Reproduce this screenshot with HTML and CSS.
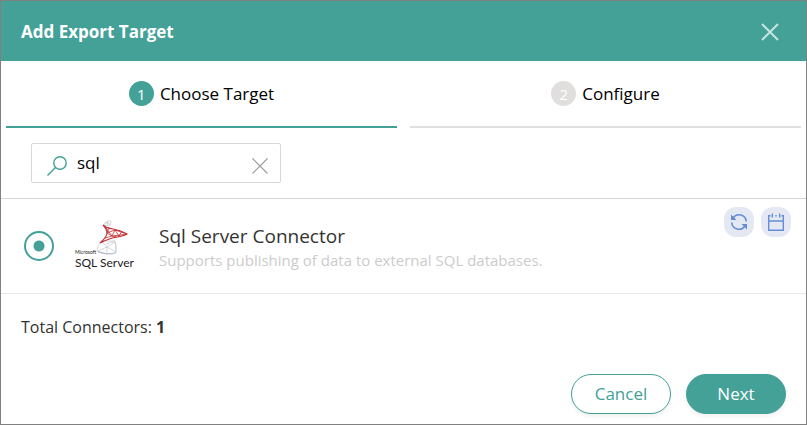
FILE: index.html
```html
<!DOCTYPE html>
<html lang="en">
<head>
<meta charset="utf-8">
<title>Add Export Target</title>
<link rel="stylesheet" href="styles.css">
</head>
<body>
<main class="dialog" role="dialog" aria-labelledby="dialog-title">
  <header class="header">
    <h1 class="title" id="dialog-title">Add Export Target</h1>
    <button class="icon-button" type="button" aria-label="Close">
      <svg width="18" height="18" viewBox="0 0 18 18" fill="none" stroke="#c7e3e0" stroke-width="2"><path d="M1 1l16 16M17 1L1 17"/></svg>
    </button>
  </header>

  <ol class="steps">
    <li class="step step-active" aria-current="step"><span class="step-number">1</span><span>Choose Target</span></li>
    <li class="step"><span class="step-number">2</span><span>Configure</span></li>
  </ol>

  <div class="search-bar">
    <div class="search">
      <svg width="20" height="20" viewBox="0 0 20 20" fill="none" stroke="#43a198" stroke-width="1.4"><circle cx="13" cy="7" r="6.2"/><path d="M8.500 11.500L.5 19.500"/></svg>
      <input class="search-input" type="text" value="sql" aria-label="Search connectors">
      <button class="icon-button" type="button" aria-label="Clear search">
        <svg width="16" height="16" viewBox="0 0 16 16" fill="none" stroke="#999" stroke-width="1.1"><path d="M.5.5l15 15M15.500.5l-15 15"/></svg>
      </button>
    </div>
  </div>

  <section class="connector">
    <input class="radio" type="radio" name="connector" id="sql-server" checked>
    <svg class="logo" width="62" height="52" viewBox="0 0 62 52" aria-hidden="true">
      <g fill="none" stroke="#c3c7cc" stroke-width=".7">
        <path d="M28 6q1-4 5-5t3 1l-1 3-7 1zM32 2l1 3M28 6l5-4 2 3"/>
        <path d="M26 21q-4 6-4 10 1 2 9 3t10-2q1-6-1-11zM26 21l6 6 8-5 1 10-9-5-9 4 9 3 0-7M40 21l-9 3"/>
      </g>
      <path d="M23 32q8 3 18 1" fill="none" stroke="#a9b7cd" stroke-width=".8"/>
      <g fill="none" stroke="#c22f33" stroke-width=".8">
        <path d="M28 5q3 3 10 4t14 5q-3 2-10 3T25 23q7-6 7-10t-4-8z" stroke-width="1.1"/>
        <path d="M31 8l6 8 3-6 4 6 3-5M32 13l8-3 12 4-15 2-5-3M30 18l7-2 5 1M34 7l-2 6"/>
      </g>
      <text class="logo-maker" x="0" y="34">Microsoft</text>
      <text class="logo-name" x="0" y="47">SQL Server</text>
    </svg>
    <label class="connector-text" for="sql-server">
      <span class="connector-name">Sql Server Connector</span>
      <span class="connector-description">Supports publishing of data to external SQL databases.</span>
    </label>
    <div class="badges">
      <span class="badge" role="img" aria-label="Refresh">
        <svg width="18" height="18" viewBox="0 0 18 18" fill="none" stroke="#668fd3" stroke-width="1.6"><path d="M3 5A7.300 7.300 0 0 1 16.300 8.500M15 13A7.300 7.300 0 0 1 1.700 9.500"/><path d="M1 1.500v5.500h5.500zM17 16.500v-5.500h-5.500z" fill="#668fd3" stroke="none"/></svg>
      </span>
      <span class="badge" role="img" aria-label="Schedule">
        <svg width="18" height="18" viewBox="0 0 18 18" fill="none" stroke="#668fd3" stroke-width="1.4"><path d="M3.500 2.700H1.700v14.600h14.600V2.700h-1.800M1.700 8h14.600M8.300 2.700h1.400"/><path d="M5.300 .5v4M12.700 .5v4"/></svg>
      </span>
    </div>
  </section>

  <footer class="footer">
    <p class="total">Total Connectors: <strong>1</strong></p>
    <div class="actions">
      <button class="button" type="button">Cancel</button>
      <button class="button button-primary" type="button">Next</button>
    </div>
  </footer>
</main>
</body>
</html>
```
FILE: styles.css
```css
* {
  box-sizing: border-box;
}

body {
  margin: 0;
  color: #333;
  background: #fff;
  font: 17px/24px "Open Sans", "Noto Sans", sans-serif;
}

.dialog {
  display: flex;
  flex-direction: column;
  min-height: 100vh;
  border: 1px solid #808080;
}

.header {
  display: flex;
  align-items: center;
  justify-content: space-between;
  height: 60px;
  padding: 2px 27px 0 20px;
  background: #43a198;
}

.title {
  margin: 0;
  color: #fff;
  font-size: 17px;
  font-weight: 700;
}

.icon-button {
  display: flex;
  padding: 0;
  border: 0;
  background: none;
}

.steps {
  display: grid;
  grid-template-columns: 1fr 1fr;
  gap: 13px;
  margin: 0;
  padding: 0 5px;
  list-style: none;
}

.step {
  display: flex;
  align-items: center;
  justify-content: center;
  gap: 6px;
  height: 67px;
  border-bottom: 2px solid #e0e0e0;
  color: #000;
}

.step-active {
  border-color: #43a198;
  font-weight: 500;
}

.step-number {
  width: 25px;
  height: 25px;
  border-radius: 50%;
  color: #fff;
  background: #e0dfdd;
  font-size: 15px;
  line-height: 27px;
  text-align: center;
}

.step-active .step-number {
  background: #43a198;
}

.search-bar {
  padding: 15px 30px;
  border-bottom: 1px solid #d6d6d2;
}

.search {
  display: flex;
  align-items: center;
  gap: 10px;
  width: 250px;
  height: 40px;
  padding: 6px 12px 0 15px;
  border: 1px solid #d8d8d8;
  border-radius: 2px;
}

.search-input {
  flex: 1;
  min-width: 0;
  padding: 0 0 6px;
  border: 0;
  outline: 0;
  color: #000;
  background: none;
  font: inherit;
}

.connector {
  display: flex;
  align-items: center;
  height: 95px;
  padding: 0 15px 0 23px;
  border-bottom: 1px solid #e8e8e8;
}

.radio {
  width: 30px;
  height: 30px;
  margin: 0 21px 0 0;
  border: 2px solid #43a198;
  border-radius: 50%;
  appearance: none;
  background: radial-gradient(circle, #43a198 5px, transparent 6px);
}

.logo {
  margin-right: 22px;
  fill: #222;
  font-family: Lato, sans-serif;
}

.logo-maker {
  font-size: 5px;
}

.logo-name {
  font-size: 12px;
}

.connector-text {
  display: flex;
  flex: 1;
  flex-direction: column;
  padding-top: 4px;
}

.connector-name {
  font-size: 19px;
}

.connector-description {
  color: #ccc;
  font-size: 15px;
}

.badges {
  display: flex;
  align-self: flex-start;
  gap: 7px;
  padding-top: 8px;
}

.badge {
  display: grid;
  place-items: center;
  width: 30px;
  height: 30px;
  border-radius: 12px;
  background: #e3e8f2;
}

.footer {
  display: flex;
  flex: 1;
  flex-direction: column;
  justify-content: space-between;
  padding: 21px 20px 10px;
}

.total {
  margin: 0;
  font-size: 16px;
}

.actions {
  display: flex;
  justify-content: flex-end;
  gap: 15px;
}

.button {
  width: 100px;
  height: 40px;
  padding: 0;
  border: 1px solid #43a198;
  border-radius: 20px;
  color: #43a198;
  background: #fff;
  box-shadow: 0 2px 4px #0001;
  font: inherit;
}

.button-primary {
  color: #fff;
  background: #43a198;
}
```
